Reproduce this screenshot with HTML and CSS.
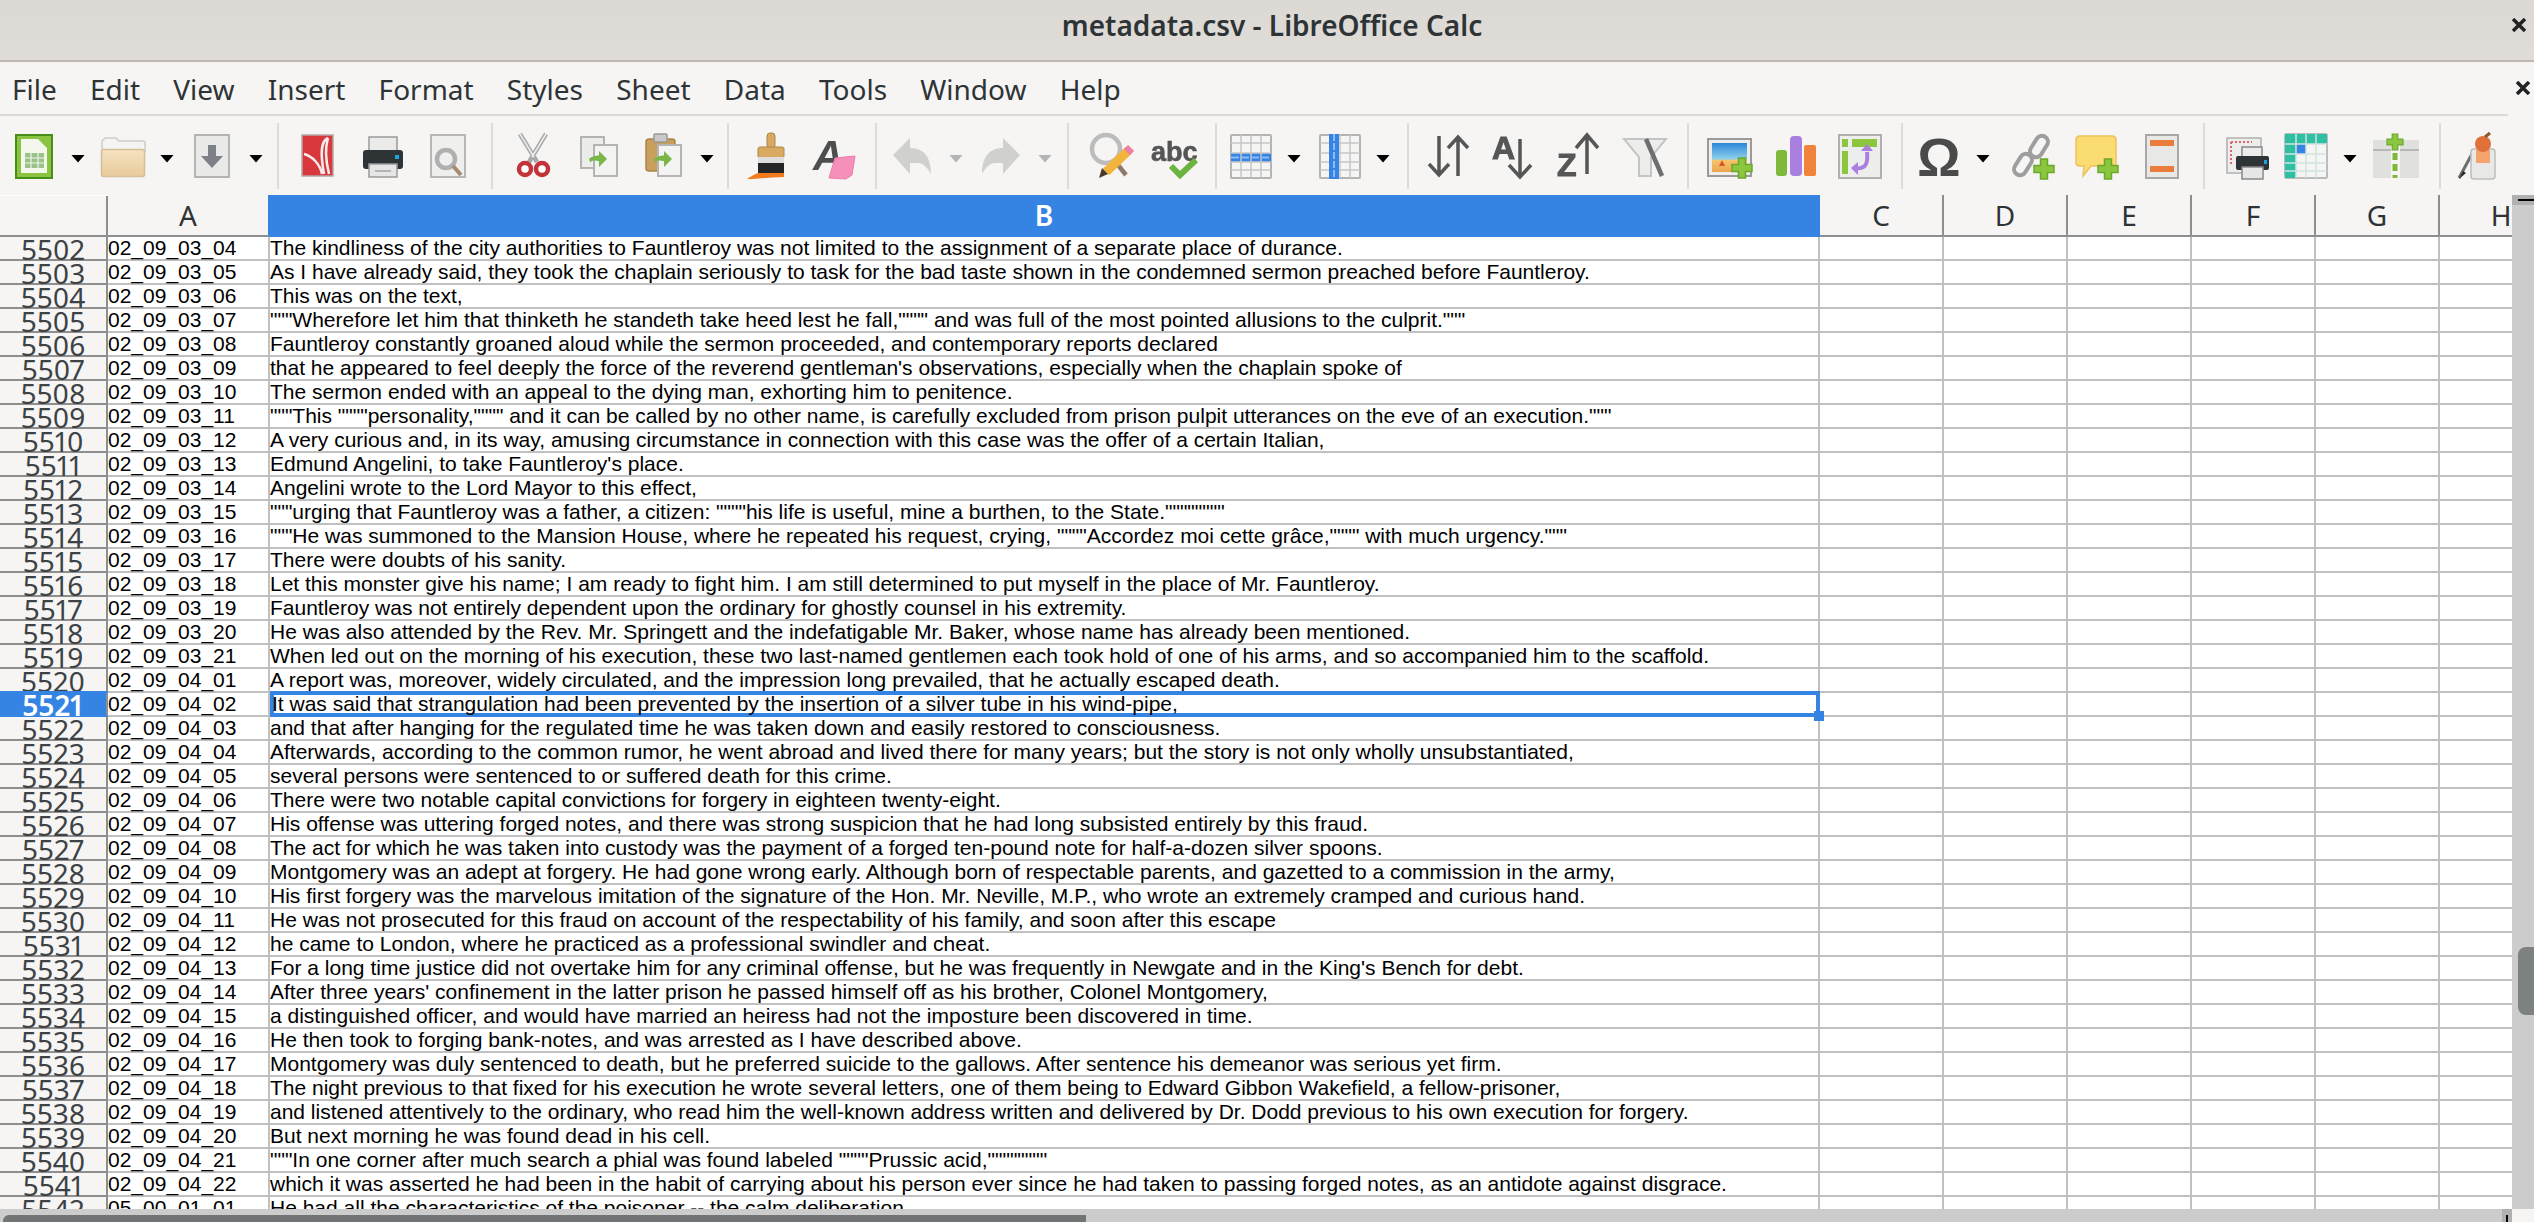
FILE: index.html
```html
<!DOCTYPE html>
<html lang="en">
<head>
<meta charset="UTF-8">
<title>metadata.csv - LibreOffice Calc</title>
<link rel="stylesheet" href="styles.css">
</head>
<body>
<svg class="sprite">
    <defs>
        <g id="plus"><path d="M-3.5-10h7v6.500h6.500v7h-6.500v6.500h-7v-6.500h-6.500v-7h6.500z" fill="#8cc63f" stroke="#6aa82c" stroke-width="1.500"/></g>
        <g id="back-arrow"><path d="M-9 0 -1-7v4C4-3 8-1 9 0 8 2 8 3 8 3 6 1 3 1-1 2V7z" fill="#7ab648"/></g>
        <linearGradient id="folder" x1="0" y1="0" x2="0" y2="1"><stop offset="0" stop-color="#f6e2c2"/><stop offset="1" stop-color="#e8cb9c"/></linearGradient>
        <linearGradient id="sky" x1="0" y1="0" x2="0" y2="1"><stop offset="0" stop-color="#2a86d8"/><stop offset=".55" stop-color="#8fd0ee"/><stop offset=".6" stop-color="#f5c46c"/><stop offset="1" stop-color="#eaa44c"/></linearGradient>
    </defs>
</svg>

<header class="titlebar">
    <span class="window-title">metadata.csv - LibreOffice Calc</span>
    <svg class="close-title" viewBox="0 0 14 14"><path d="M1 1 13 13M13 1 1 13"/></svg>
</header>

<nav class="menubar">
    <div class="menus">
        <span>File</span><span>Edit</span><span>View</span><span>Insert</span><span>Format</span><span>Styles</span><span>Sheet</span><span>Data</span><span>Tools</span><span>Window</span><span>Help</span>
    </div>
    <svg class="close-doc" viewBox="0 0 14 14"><path d="M1 1 13 13M13 1 1 13"/></svg>
</nav>

<div class="toolbar">
    <!-- new spreadsheet -->
    <svg class="icon" viewBox="0 0 52 52"><rect x="8" y="5" width="36" height="43" fill="#8ac440" stroke="#46901a" stroke-width="2"/><path d="M13 9h17l9 9v25H13z" fill="#f3f7ec"/><rect x="17" y="23" width="19" height="15" fill="#9ac28a"/><path d="M17 28h19M17 33h19M23 23v15M30 23v15" stroke="#eef4e8" stroke-width="1.200"/></svg><i class="drop"></i>
    <!-- open -->
    <svg class="icon" viewBox="0 0 52 52"><path d="M5 22V11l3-3h11l3 3h24q2 0 2 2v9z" fill="#f4f4f2" stroke="#cfccc6" stroke-width="1.500"/><rect x="4.500" y="19.500" width="43" height="27" rx="2" fill="url(#folder)" stroke="#d6bf98" stroke-width="1.500"/></svg><i class="drop"></i>
    <!-- save -->
    <svg class="icon" viewBox="0 0 52 52"><rect x="9" y="5" width="34" height="42" fill="#e9e9e8" stroke="#b4b4b4" stroke-width="2"/><path d="M22 15h8v11h7L26 38 15 26h7z" fill="#7d8087"/></svg><i class="drop"></i>
    <span class="sep sep-1"></span>
    <!-- export pdf -->
    <svg class="icon" viewBox="0 0 52 52"><rect x="10" y="5" width="31" height="41" fill="#d8383c" stroke="#b8a6a6" stroke-width="1.500"/><path d="M36 8C29 11 28 22 32 44M36 8C33 18 34 32 37 44M12 24C20 26 28 34 30 44" fill="none" stroke="#f5eded" stroke-width="2.500"/></svg>
    <!-- print -->
    <svg class="icon" viewBox="0 0 52 52"><rect x="12" y="7" width="28" height="16" fill="#ebebea" stroke="#9a9a9a" stroke-width="1.500"/><rect x="6" y="20" width="40" height="19" rx="3" fill="#2e3436"/><rect x="12" y="34" width="28" height="13" fill="#e6e6e6" stroke="#9a9a9a" stroke-width="1.500"/><path d="M18 41h16" stroke="#b4b4b4" stroke-width="2"/><rect x="38" y="25" width="4" height="4" fill="#17a5e6"/></svg>
    <!-- print preview -->
    <svg class="icon" viewBox="0 0 52 52"><rect x="9" y="5" width="34" height="42" fill="#efefee" stroke="#b6b6b6" stroke-width="2"/><circle cx="24" cy="29" r="9" fill="none" stroke="#b0b0b0" stroke-width="4.500"/><path d="M31 36 39 45" stroke="#a68a72" stroke-width="4"/></svg>
    <span class="sep sep-2"></span>
    <!-- cut -->
    <svg class="icon" viewBox="0 0 52 52"><path d="M13 4 30 32M39 4 22 32" stroke="#a9a9a9" stroke-width="4.500" fill="none"/><path d="M13 4 27 27M39 4 25 27" stroke="#ececec" stroke-width="1.500"/><circle cx="18" cy="39" r="6" fill="#fff" stroke="#c2343a" stroke-width="4.500"/><circle cx="35" cy="39" r="6" fill="#fff" stroke="#c2343a" stroke-width="4.500"/></svg>
    <!-- copy -->
    <svg class="icon" viewBox="0 0 52 52"><rect x="9" y="7" width="23" height="31" fill="#ececeb" stroke="#b4b4b4" stroke-width="2"/><rect x="22" y="15" width="23" height="31" fill="#f3f3f2" stroke="#b4b4b4" stroke-width="2"/><use href="#back-arrow" transform="translate(26 29) scale(1 1.150) scale(-1 1)"/></svg>
    <!-- paste -->
    <svg class="icon" viewBox="0 0 52 52"><rect x="9" y="9" width="29" height="32" rx="3" fill="#c99f5e" stroke="#a98548" stroke-width="1.500"/><rect x="17" y="4" width="13" height="8" rx="1" fill="#c9c9c9" stroke="#999" stroke-width="1.500"/><rect x="21" y="15" width="23" height="31" fill="#f3f3f2" stroke="#b4b4b4" stroke-width="2"/><use href="#back-arrow" transform="translate(26 29) scale(-1 1.150)"/></svg><i class="drop"></i>
    <span class="sep sep-3"></span>
    <!-- clone formatting -->
    <svg class="icon" viewBox="0 0 52 52"><rect x="24" y="3" width="8" height="15" rx="3" fill="#d9a960" stroke="#a98548"/><rect x="15" y="17" width="26" height="11" rx="2" fill="#d9a960" stroke="#a98548"/><rect x="15" y="27" width="26" height="6" fill="#ddd"/><rect x="15" y="33" width="26" height="10" fill="#262626"/><path d="M4 49C10 45 15 43 15 43H41V47C30 47 16 49 4 49z" fill="#f07a1c"/></svg>
    <!-- clear formatting -->
    <svg class="icon" viewBox="0 0 52 52"><text x="5" y="40" class="glyph-a">A</text><path d="M27 28 47 26 44 45 38 49 21 48z" fill="#f78fbb" stroke="#ec7aa8"/></svg>
    <span class="sep sep-4"></span>
    <!-- undo -->
    <svg class="icon" viewBox="0 0 52 52"><path d="M7 25 24 8v10c13 0 21 8 21 26-4-7-8-11-13-11h-8v11z" fill="#d0d0ce"/></svg><i class="drop drop-off"></i>
    <!-- redo -->
    <svg class="icon" viewBox="0 0 52 52"><path d="M45 25 28 8v10C15 18 7 26 7 44c4-7 8-11 13-11h8v11z" fill="#d0d0ce"/></svg><i class="drop drop-off"></i>
    <span class="sep sep-5"></span>
    <!-- find and replace -->
    <svg class="icon" viewBox="0 0 52 52"><circle cx="22" cy="19" r="14" fill="none" stroke="#bcbcbc" stroke-width="4.500"/><path d="M30 30 42 45" stroke="#8d7a68" stroke-width="4.500"/><path d="M45 20 22 42" stroke="#f2b43a" stroke-width="9"/><path d="M42 17 48 23" stroke="#ee7ea4" stroke-width="6"/><path d="M18 38 24 44 15 48z" fill="#4a3a2a"/></svg>
    <!-- spelling -->
    <svg class="icon" viewBox="0 0 52 52"><text x="2" y="31" class="glyph-abc">abc</text><path d="M22 36 31 45 47 30" fill="none" stroke="#6cb33f" stroke-width="6"/></svg>
    <span class="sep sep-6"></span>
    <!-- row -->
    <svg class="icon" viewBox="0 0 52 52"><rect x="7" y="5" width="40" height="43" rx="1" fill="#f5f5f4" stroke="#b4b4b4" stroke-width="2"/><rect x="7" y="23" width="40" height="9" fill="#3584e4"/><path d="M17 5v43M27 5v43M37 5v43M7 13h40M7 23h40M7 32h40M7 40h40" stroke="#c6c6c6" stroke-width="1.500"/><path d="M7 27.500h40" stroke="#8cbcf2" stroke-width="2" stroke-dasharray="8 2"/></svg><i class="drop"></i>
    <!-- column -->
    <svg class="icon" viewBox="0 0 52 52"><rect x="7" y="5" width="40" height="43" rx="1" fill="#f5f5f4" stroke="#b4b4b4" stroke-width="2"/><path d="M7 13h40M7 23h40M7 32h40M7 40h40M27 5v43M37 5v43" stroke="#c6c6c6" stroke-width="1.500"/><rect x="16" y="4" width="10" height="45" fill="#3584e4"/><path d="M21 4v45" stroke="#8cbcf2" stroke-width="2" stroke-dasharray="7 2"/></svg><i class="drop"></i>
    <span class="sep sep-7"></span>
    <!-- sort -->
    <svg class="icon" viewBox="0 0 52 52"><path d="M16 6V44M6 34 16 45 26 34M35 46V8M25 18 35 7 45 18" fill="none" stroke="#565656" stroke-width="3.500"/></svg>
    <!-- sort ascending -->
    <svg class="icon" viewBox="0 0 52 52"><text x="4" y="29" class="glyph-sort">A</text><path d="M32 9V46M21 35 32 47 43 35" fill="none" stroke="#565656" stroke-width="3.500"/></svg>
    <!-- sort descending -->
    <svg class="icon" viewBox="0 0 52 52"><text x="4" y="46" class="glyph-sort">Z</text><path d="M34 44V6M23 18 34 5 45 18" fill="none" stroke="#565656" stroke-width="3.500"/></svg>
    <!-- autofilter -->
    <svg class="icon" viewBox="0 0 52 52"><path d="M6 9H48L33 27V46H21V27z" fill="#ededec" stroke="#c4c4c4" stroke-width="2"/><path d="M28 9 44 46" stroke="#6e6e6e" stroke-width="4.500"/></svg>
    <span class="sep sep-8"></span>
    <!-- image -->
    <svg class="icon" viewBox="0 0 52 52"><rect x="4" y="9" width="43" height="37" fill="#ededec" stroke="#9a9a9a" stroke-width="2"/><rect x="8" y="13" width="35" height="29" fill="url(#sky)"/><path d="M15 36 18 30 21 36z" fill="#d9542a"/><use href="#plus" transform="translate(38 38)"/></svg>
    <!-- chart -->
    <svg class="icon" viewBox="0 0 52 52"><rect x="7" y="20" width="11" height="26" rx="3" fill="#7fb93c"/><rect x="21" y="6" width="12" height="40" rx="4" fill="#a97fe0"/><rect x="35" y="15" width="12" height="31" rx="2" fill="#f0843c"/></svg>
    <!-- pivot table -->
    <svg class="icon" viewBox="0 0 52 52"><rect x="5" y="5" width="42" height="43" fill="#ededec" stroke="#b0b0b0" stroke-width="2"/><rect x="8" y="9" width="6" height="8" fill="#8cc63f"/><rect x="18" y="9" width="25" height="8" fill="#8cc63f"/><rect x="8" y="21" width="6" height="23" fill="#8cc63f"/><path d="M20 38C33 40 34 32 33 22" fill="none" stroke="#a97fe0" stroke-width="4"/><path d="M27 21 33 14 39 21zM24 32 17 38 24 45z" fill="#a97fe0"/></svg>
    <span class="sep sep-9"></span>
    <!-- special character -->
    <svg class="icon" viewBox="0 0 52 52"><text x="26" y="46" class="glyph-omega">Ω</text></svg><i class="drop"></i>
    <!-- hyperlink -->
    <svg class="icon link-first" viewBox="0 0 52 52"><rect x="27" y="5" width="12" height="23" rx="6" transform="rotate(32 33 16.500)" fill="none" stroke="#9e9e9e" stroke-width="4"/><rect x="11" y="23" width="12" height="23" rx="6" transform="rotate(32 17 34.500)" fill="none" stroke="#9e9e9e" stroke-width="4"/><use href="#plus" transform="translate(38 39)"/></svg>
    <!-- comment -->
    <svg class="icon" viewBox="0 0 52 52"><path d="M9 6H41Q45 6 45 10V33Q45 36 41 36H20L12 46 13 36H9Q5 36 5 33V10Q5 6 9 6z" fill="#fbdc72" stroke="#ecc25c" stroke-width="1.500"/><use href="#plus" transform="translate(37 39)"/></svg>
    <!-- page break -->
    <svg class="icon" viewBox="0 0 52 52"><rect x="10" y="5" width="32" height="43" fill="#e8e8e7" stroke="#a8a8a8" stroke-width="2"/><rect x="14" y="10" width="24" height="6" fill="#ea7d3c"/><rect x="14" y="36" width="24" height="6" fill="#ea7d3c"/></svg>
    <span class="sep sep-10"></span>
    <!-- print area -->
    <svg class="icon icon-shift" viewBox="0 0 52 52"><rect x="5" y="8" width="34" height="35" fill="#ededec" stroke="#b0b0b0" stroke-width="1.500"/><path d="M9 12H30M9 12V36" stroke="#e0646c" stroke-width="2" stroke-dasharray="2 2"/><rect x="20" y="17" width="20" height="12" fill="#ececec" stroke="#888" stroke-width="1.500"/><rect x="14" y="26" width="33" height="14" rx="2" fill="#2e3436"/><rect x="20" y="37" width="21" height="12" fill="#e6e6e6" stroke="#888" stroke-width="1.500"/><rect x="42" y="30" width="3" height="4" fill="#17a5e6"/></svg>
    <!-- define range -->
    <svg class="icon" viewBox="0 0 52 52"><rect x="5" y="4" width="42" height="44" rx="1" fill="#f5f5f4" stroke="#a8a8a8" stroke-width="1.500"/><rect x="5" y="4" width="42" height="10" fill="#2fc0a4"/><rect x="5" y="4" width="11" height="44" fill="#2fc0a4"/><rect x="16" y="14" width="10" height="10" fill="#3584e4"/><path d="M16 4v44M26 4v44M36 4v44M5 14h42M5 24h42M5 33h42M5 41h42" stroke="#cfe4e0" stroke-width="1.500"/></svg><i class="drop"></i>
    <!-- freeze rows and columns -->
    <svg class="icon" viewBox="0 0 52 52"><rect x="4" y="10" width="18" height="38" fill="#e0e0df"/><rect x="31" y="10" width="19" height="38" fill="#e0e0df"/><path d="M4 20h18M31 20h19" stroke="#b8b8b8" stroke-width="2"/><path d="M26 12V48" stroke="#7fb93c" stroke-width="5" stroke-dasharray="7 4"/><use href="#plus" transform="translate(26 12) scale(.8)"/></svg>
    <span class="sep sep-11"></span>
    <!-- styles and formatting brush -->
    <svg class="icon" viewBox="0 0 52 52"><path d="M5 48 19 22" stroke="#6e6e6e" stroke-width="3"/><path d="M5 49 9 41 12 43z" fill="#2a2a2a"/><rect x="17" y="19" width="24" height="30" rx="3" fill="#e8e8e7" stroke="#bdbdbd" stroke-width="1.500"/><rect x="22" y="20" width="14" height="13" fill="#f4a36c"/><circle cx="29" cy="14" r="8" fill="#e0703a"/><path d="M31 7 36 3" stroke="#8d5a2a" stroke-width="3"/></svg>
</div>

<div class="workarea">
    <div class="sheet">
        <div class="corner"></div>
        <div class="col-head col-before">A</div>
        <div class="col-head col-on">B</div>
        <div class="col-head">C</div>
        <div class="col-head">D</div>
        <div class="col-head">E</div>
        <div class="col-head">F</div>
        <div class="col-head">G</div>
        <div class="col-head">H</div>

        <div class="rownum">5502</div><div class="cell">02_09_03_04</div><div class="cell">The kindliness of the city authorities to Fauntleroy was not limited to the assignment of a separate place of durance.</div><div class="cell"></div><div class="cell"></div><div class="cell"></div><div class="cell"></div><div class="cell"></div><div class="cell"></div>
        <div class="rownum">5503</div><div class="cell">02_09_03_05</div><div class="cell">As I have already said, they took the chaplain seriously to task for the bad taste shown in the condemned sermon preached before Fauntleroy.</div><div class="cell"></div><div class="cell"></div><div class="cell"></div><div class="cell"></div><div class="cell"></div><div class="cell"></div>
        <div class="rownum">5504</div><div class="cell">02_09_03_06</div><div class="cell">This was on the text,</div><div class="cell"></div><div class="cell"></div><div class="cell"></div><div class="cell"></div><div class="cell"></div><div class="cell"></div>
        <div class="rownum">5505</div><div class="cell">02_09_03_07</div><div class="cell">"""Wherefore let him that thinketh he standeth take heed lest he fall,"""" and was full of the most pointed allusions to the culprit."""</div><div class="cell"></div><div class="cell"></div><div class="cell"></div><div class="cell"></div><div class="cell"></div><div class="cell"></div>
        <div class="rownum">5506</div><div class="cell">02_09_03_08</div><div class="cell">Fauntleroy constantly groaned aloud while the sermon proceeded, and contemporary reports declared</div><div class="cell"></div><div class="cell"></div><div class="cell"></div><div class="cell"></div><div class="cell"></div><div class="cell"></div>
        <div class="rownum">5507</div><div class="cell">02_09_03_09</div><div class="cell">that he appeared to feel deeply the force of the reverend gentleman's observations, especially when the chaplain spoke of</div><div class="cell"></div><div class="cell"></div><div class="cell"></div><div class="cell"></div><div class="cell"></div><div class="cell"></div>
        <div class="rownum">5508</div><div class="cell">02_09_03_10</div><div class="cell">The sermon ended with an appeal to the dying man, exhorting him to penitence.</div><div class="cell"></div><div class="cell"></div><div class="cell"></div><div class="cell"></div><div class="cell"></div><div class="cell"></div>
        <div class="rownum">5509</div><div class="cell">02_09_03_11</div><div class="cell">"""This """"personality,"""" and it can be called by no other name, is carefully excluded from prison pulpit utterances on the eve of an execution."""</div><div class="cell"></div><div class="cell"></div><div class="cell"></div><div class="cell"></div><div class="cell"></div><div class="cell"></div>
        <div class="rownum">5510</div><div class="cell">02_09_03_12</div><div class="cell">A very curious and, in its way, amusing circumstance in connection with this case was the offer of a certain Italian,</div><div class="cell"></div><div class="cell"></div><div class="cell"></div><div class="cell"></div><div class="cell"></div><div class="cell"></div>
        <div class="rownum">5511</div><div class="cell">02_09_03_13</div><div class="cell">Edmund Angelini, to take Fauntleroy's place.</div><div class="cell"></div><div class="cell"></div><div class="cell"></div><div class="cell"></div><div class="cell"></div><div class="cell"></div>
        <div class="rownum">5512</div><div class="cell">02_09_03_14</div><div class="cell">Angelini wrote to the Lord Mayor to this effect,</div><div class="cell"></div><div class="cell"></div><div class="cell"></div><div class="cell"></div><div class="cell"></div><div class="cell"></div>
        <div class="rownum">5513</div><div class="cell">02_09_03_15</div><div class="cell">"""urging that Fauntleroy was a father, a citizen: """"his life is useful, mine a burthen, to the State.""""""""</div><div class="cell"></div><div class="cell"></div><div class="cell"></div><div class="cell"></div><div class="cell"></div><div class="cell"></div>
        <div class="rownum">5514</div><div class="cell">02_09_03_16</div><div class="cell">"""He was summoned to the Mansion House, where he repeated his request, crying, """"Accordez moi cette grâce,"""" with much urgency."""</div><div class="cell"></div><div class="cell"></div><div class="cell"></div><div class="cell"></div><div class="cell"></div><div class="cell"></div>
        <div class="rownum">5515</div><div class="cell">02_09_03_17</div><div class="cell">There were doubts of his sanity.</div><div class="cell"></div><div class="cell"></div><div class="cell"></div><div class="cell"></div><div class="cell"></div><div class="cell"></div>
        <div class="rownum">5516</div><div class="cell">02_09_03_18</div><div class="cell">Let this monster give his name; I am ready to fight him. I am still determined to put myself in the place of Mr. Fauntleroy.</div><div class="cell"></div><div class="cell"></div><div class="cell"></div><div class="cell"></div><div class="cell"></div><div class="cell"></div>
        <div class="rownum">5517</div><div class="cell">02_09_03_19</div><div class="cell">Fauntleroy was not entirely dependent upon the ordinary for ghostly counsel in his extremity.</div><div class="cell"></div><div class="cell"></div><div class="cell"></div><div class="cell"></div><div class="cell"></div><div class="cell"></div>
        <div class="rownum">5518</div><div class="cell">02_09_03_20</div><div class="cell">He was also attended by the Rev. Mr. Springett and the indefatigable Mr. Baker, whose name has already been mentioned.</div><div class="cell"></div><div class="cell"></div><div class="cell"></div><div class="cell"></div><div class="cell"></div><div class="cell"></div>
        <div class="rownum">5519</div><div class="cell">02_09_03_21</div><div class="cell">When led out on the morning of his execution, these two last-named gentlemen each took hold of one of his arms, and so accompanied him to the scaffold.</div><div class="cell"></div><div class="cell"></div><div class="cell"></div><div class="cell"></div><div class="cell"></div><div class="cell"></div>
        <div class="rownum">5520</div><div class="cell">02_09_04_01</div><div class="cell">A report was, moreover, widely circulated, and the impression long prevailed, that he actually escaped death.</div><div class="cell"></div><div class="cell"></div><div class="cell"></div><div class="cell"></div><div class="cell"></div><div class="cell"></div>
        <div class="rownum rownum-on">5521</div><div class="cell">02_09_04_02</div><div class="cell cell-on">It was said that strangulation had been prevented by the insertion of a silver tube in his wind-pipe,</div><div class="cell"></div><div class="cell"></div><div class="cell"></div><div class="cell"></div><div class="cell"></div><div class="cell"></div>
        <div class="rownum">5522</div><div class="cell">02_09_04_03</div><div class="cell">and that after hanging for the regulated time he was taken down and easily restored to consciousness.</div><div class="cell"></div><div class="cell"></div><div class="cell"></div><div class="cell"></div><div class="cell"></div><div class="cell"></div>
        <div class="rownum">5523</div><div class="cell">02_09_04_04</div><div class="cell">Afterwards, according to the common rumor, he went abroad and lived there for many years; but the story is not only wholly unsubstantiated,</div><div class="cell"></div><div class="cell"></div><div class="cell"></div><div class="cell"></div><div class="cell"></div><div class="cell"></div>
        <div class="rownum">5524</div><div class="cell">02_09_04_05</div><div class="cell">several persons were sentenced to or suffered death for this crime.</div><div class="cell"></div><div class="cell"></div><div class="cell"></div><div class="cell"></div><div class="cell"></div><div class="cell"></div>
        <div class="rownum">5525</div><div class="cell">02_09_04_06</div><div class="cell">There were two notable capital convictions for forgery in eighteen twenty-eight.</div><div class="cell"></div><div class="cell"></div><div class="cell"></div><div class="cell"></div><div class="cell"></div><div class="cell"></div>
        <div class="rownum">5526</div><div class="cell">02_09_04_07</div><div class="cell">His offense was uttering forged notes, and there was strong suspicion that he had long subsisted entirely by this fraud.</div><div class="cell"></div><div class="cell"></div><div class="cell"></div><div class="cell"></div><div class="cell"></div><div class="cell"></div>
        <div class="rownum">5527</div><div class="cell">02_09_04_08</div><div class="cell">The act for which he was taken into custody was the payment of a forged ten-pound note for half-a-dozen silver spoons.</div><div class="cell"></div><div class="cell"></div><div class="cell"></div><div class="cell"></div><div class="cell"></div><div class="cell"></div>
        <div class="rownum">5528</div><div class="cell">02_09_04_09</div><div class="cell">Montgomery was an adept at forgery. He had gone wrong early. Although born of respectable parents, and gazetted to a commission in the army,</div><div class="cell"></div><div class="cell"></div><div class="cell"></div><div class="cell"></div><div class="cell"></div><div class="cell"></div>
        <div class="rownum">5529</div><div class="cell">02_09_04_10</div><div class="cell">His first forgery was the marvelous imitation of the signature of the Hon. Mr. Neville, M.P., who wrote an extremely cramped and curious hand.</div><div class="cell"></div><div class="cell"></div><div class="cell"></div><div class="cell"></div><div class="cell"></div><div class="cell"></div>
        <div class="rownum">5530</div><div class="cell">02_09_04_11</div><div class="cell">He was not prosecuted for this fraud on account of the respectability of his family, and soon after this escape</div><div class="cell"></div><div class="cell"></div><div class="cell"></div><div class="cell"></div><div class="cell"></div><div class="cell"></div>
        <div class="rownum">5531</div><div class="cell">02_09_04_12</div><div class="cell">he came to London, where he practiced as a professional swindler and cheat.</div><div class="cell"></div><div class="cell"></div><div class="cell"></div><div class="cell"></div><div class="cell"></div><div class="cell"></div>
        <div class="rownum">5532</div><div class="cell">02_09_04_13</div><div class="cell">For a long time justice did not overtake him for any criminal offense, but he was frequently in Newgate and in the King's Bench for debt.</div><div class="cell"></div><div class="cell"></div><div class="cell"></div><div class="cell"></div><div class="cell"></div><div class="cell"></div>
        <div class="rownum">5533</div><div class="cell">02_09_04_14</div><div class="cell">After three years' confinement in the latter prison he passed himself off as his brother, Colonel Montgomery,</div><div class="cell"></div><div class="cell"></div><div class="cell"></div><div class="cell"></div><div class="cell"></div><div class="cell"></div>
        <div class="rownum">5534</div><div class="cell">02_09_04_15</div><div class="cell">a distinguished officer, and would have married an heiress had not the imposture been discovered in time.</div><div class="cell"></div><div class="cell"></div><div class="cell"></div><div class="cell"></div><div class="cell"></div><div class="cell"></div>
        <div class="rownum">5535</div><div class="cell">02_09_04_16</div><div class="cell">He then took to forging bank-notes, and was arrested as I have described above.</div><div class="cell"></div><div class="cell"></div><div class="cell"></div><div class="cell"></div><div class="cell"></div><div class="cell"></div>
        <div class="rownum">5536</div><div class="cell">02_09_04_17</div><div class="cell">Montgomery was duly sentenced to death, but he preferred suicide to the gallows. After sentence his demeanor was serious yet firm.</div><div class="cell"></div><div class="cell"></div><div class="cell"></div><div class="cell"></div><div class="cell"></div><div class="cell"></div>
        <div class="rownum">5537</div><div class="cell">02_09_04_18</div><div class="cell">The night previous to that fixed for his execution he wrote several letters, one of them being to Edward Gibbon Wakefield, a fellow-prisoner,</div><div class="cell"></div><div class="cell"></div><div class="cell"></div><div class="cell"></div><div class="cell"></div><div class="cell"></div>
        <div class="rownum">5538</div><div class="cell">02_09_04_19</div><div class="cell">and listened attentively to the ordinary, who read him the well-known address written and delivered by Dr. Dodd previous to his own execution for forgery.</div><div class="cell"></div><div class="cell"></div><div class="cell"></div><div class="cell"></div><div class="cell"></div><div class="cell"></div>
        <div class="rownum">5539</div><div class="cell">02_09_04_20</div><div class="cell">But next morning he was found dead in his cell.</div><div class="cell"></div><div class="cell"></div><div class="cell"></div><div class="cell"></div><div class="cell"></div><div class="cell"></div>
        <div class="rownum">5540</div><div class="cell">02_09_04_21</div><div class="cell">"""In one corner after much search a phial was found labeled """"Prussic acid,""""""""</div><div class="cell"></div><div class="cell"></div><div class="cell"></div><div class="cell"></div><div class="cell"></div><div class="cell"></div>
        <div class="rownum">5541</div><div class="cell">02_09_04_22</div><div class="cell">which it was asserted he had been in the habit of carrying about his person ever since he had taken to passing forged notes, as an antidote against disgrace.</div><div class="cell"></div><div class="cell"></div><div class="cell"></div><div class="cell"></div><div class="cell"></div><div class="cell"></div>
        <div class="rownum">5542</div><div class="cell">05_00_01_01</div><div class="cell">He had all the characteristics of the poisoner -- the calm deliberation,</div><div class="cell"></div><div class="cell"></div><div class="cell"></div><div class="cell"></div><div class="cell"></div><div class="cell"></div>
    </div>
    <div class="vscroll">
        <div class="v-split"></div>
        <div class="v-thumb"></div>
    </div>
</div>

<div class="hscroll">
    <div class="h-thumb"></div>
    <div class="h-split"></div>
    <div class="scroll-corner"></div>
</div>
</body>
</html>
```

FILE: styles.css
```css
html, body {
    margin: 0;
    padding: 0;
    height: 100%;
}
body {
    display: flex;
    flex-direction: column;
    height: 1222px;
    overflow: hidden;
    background-color: #f6f5f4;
    font-family: "Noto Sans", sans-serif;
    color: #2e3436;
}
.sprite {
    width: 0;
    height: 0;
    flex: none;
}

/* window title */
.titlebar {
    flex: none;
    height: 60px;
    display: flex;
    align-items: center;
    justify-content: center;
    position: relative;
    background: linear-gradient(#dcd9d5, #e0ddd9);
    border-bottom: 2px solid #bfb8b1;
}
.window-title {
    font-size: 28px;
    font-weight: 600;
    margin: -10px 0 0 10px;
}
.close-title, .close-doc {
    fill: none;
    stroke: #222;
    stroke-width: 3.5;
}
.close-title {
    position: absolute;
    left: 2512px;
    top: 18px;
    width: 14px;
    height: 14px;
}

/* menu */
.menubar {
    flex: none;
    height: 54px;
    display: flex;
    align-items: center;
    position: relative;
}
.menubar::after {
    content: "";
    position: absolute;
    left: 0;
    width: 2508px;
    bottom: 0;
    height: 2px;
    background-color: #dcdad7;
}
.menus {
    display: flex;
    gap: 33.2px;
    padding-left: 12px;
    font-size: 28px;
    line-height: 38px;
}
.close-doc {
    width: 14px;
    height: 14px;
    margin-left: auto;
    margin-right: 4px;
    margin-top: -3px;
}

/* toolbar */
.toolbar {
    flex: none;
    height: 79px;
    display: flex;
    align-items: center;
    padding-left: 1px;
    overflow: hidden;
}
.icon {
    flex: none;
    width: 52px;
    height: 52px;
    margin: 0 6.5px;
    filter: blur(0.5px);
}
.icon-shift {
    transform: translateX(7px);
}
.link-first {
    margin-left: 10.5px;
}
.glyph-a {
    font-family: "Liberation Sans", sans-serif;
    font-size: 42px;
    font-weight: 700;
    font-style: italic;
    fill: #4e4e4e;
}
.glyph-abc {
    font-family: "Liberation Sans", sans-serif;
    font-size: 27px;
    font-weight: 700;
    fill: #555;
    stroke: #555;
    stroke-width: 0.6;
}
.glyph-sort {
    font-family: "Liberation Sans", sans-serif;
    font-size: 32px;
    font-weight: 700;
    fill: #565656;
    stroke: #565656;
    stroke-width: 1;
}
.glyph-omega {
    font-family: "Liberation Sans", sans-serif;
    font-size: 54px;
    font-weight: 700;
    fill: #4a4a4a;
    text-anchor: middle;
}
.drop {
    flex: none;
    width: 24px;
    height: 8px;
    margin-top: 6px;
    display: block;
    background-color: #000;
    clip-path: polygon(5px 0, 19px 0, 12px 100%);
}
.drop-off {
    background-color: #b4b4b4;
}
.sep {
    flex: none;
    width: 2px;
    height: 66px;
    background-color: #dedcd9;
}
.sep-1 { margin: 0 6px 0 9px; }
.sep-2 { margin: 0 7px 0 11px; }
.sep-3 { margin: 0 7px 0 8px; }
.sep-4 { margin: 0 2px 0 9px; }
.sep-5 { margin: 0 8px 0 10px; }
.sep-6 { margin: 0 0 0 8px; }
.sep-7 { margin: 0 7px 0 12px; }
.sep-8 { margin: 0 8px 0 11px; }
.sep-9 { margin: 0 3px 0 9px; }
.sep-10 { margin: 0 3px 0 9px; }
.sep-11 { margin: 0 6px 0 12px; }

/* sheet */
.workarea {
    flex: none;
    height: 1014px;
    display: flex;
}
.sheet {
    flex: none;
    width: 2512px;
    height: 1014px;
    overflow: hidden;
    display: grid;
    grid-template-columns: 108px 162px 1550px repeat(6, 124px);
    grid-template-rows: 42px;
    grid-auto-rows: 24px;
    align-content: start;
    background-color: #fff;
}
.corner {
    background-color: #f6f5f4;
    border-right: 2px solid #8e8e8e;
    border-bottom: 2px solid #8e8e8e;
    box-sizing: border-box;
    margin-top: 1px;
}
.col-head {
    box-sizing: border-box;
    display: flex;
    align-items: center;
    justify-content: center;
    background-color: #f6f5f4;
    border-right: 2px solid #8e8e8e;
    border-bottom: 2px solid #8e8e8e;
    font-size: 28px;
}
.col-before {
    border-right-color: #3584e4;
}
.col-on {
    background-color: #3584e4;
    border-color: #3584e4;
    color: #fff;
    font-weight: 600;
}
.rownum {
    box-sizing: border-box;
    height: 24px;
    background-color: #f6f5f4;
    border-right: 2px solid #8e8e8e;
    border-bottom: 2px solid #8e8e8e;
    font-size: 28px;
    line-height: 24px;
    text-align: center;
    font-variant-numeric: proportional-nums;
    color: #3c4245;
}
.rownum-on {
    background-color: #3584e4;
    border-bottom-color: #3584e4;
    box-shadow: 0 -2px 0 #3584e4;
    color: #fff;
    font-weight: 600;
    position: relative;
}
.cell {
    box-sizing: border-box;
    height: 24px;
    border-right: 2px solid #c0c0c0;
    border-bottom: 2px solid #c0c0c0;
    font-family: "Liberation Sans", sans-serif;
    font-size: 21px;
    line-height: 22px;
    color: #000;
    white-space: nowrap;
}
.cell-on {
    position: relative;
    z-index: 1;
    padding-left: 2px;
    border-color: transparent;
}
/* selected cell frame and its fill handle, text stays on top of the frame */
.cell-on::before {
    content: "";
    position: absolute;
    z-index: -1;
    top: -2px;
    left: 0;
    right: -2px;
    bottom: -2px;
    border: 4px solid #3584e4;
}
.cell-on::after {
    content: "";
    position: absolute;
    right: -6px;
    bottom: -6px;
    width: 10px;
    height: 10px;
    background-color: #3584e4;
}

/* scrollbars */
.vscroll {
    flex: none;
    width: 22px;
    display: flex;
    flex-direction: column;
    background-color: #cccccc;
}
.v-split {
    height: 10px;
    background: linear-gradient(#b0b0b0 4px, #000 4px, #000 6px, #b0b0b0 6px);
    background-size: 16px 10px;
    background-position: right;
    background-repeat: no-repeat;
    background-color: #b0b0b0;
}
.v-thumb {
    width: 16px;
    height: 68px;
    margin: 742px 0 0 6px;
    border-radius: 8px 0 0 8px;
    background-color: #7d8181;
}
.hscroll {
    flex: none;
    height: 13px;
    display: flex;
    background-color: #cccccc;
}
.h-thumb {
    width: 1083px;
    height: 7px;
    margin: 6px 1399px 0 3px;
    border-radius: 6px 0 0 0;
    background-color: #707474;
}
.h-split {
    width: 10px;
    margin-left: 17px;
    background: linear-gradient(#000, #000) 4px 6px / 2px 7px no-repeat #b0b0b0;
}
.scroll-corner {
    width: 22px;
    background-color: #f6f5f4;
}
```
